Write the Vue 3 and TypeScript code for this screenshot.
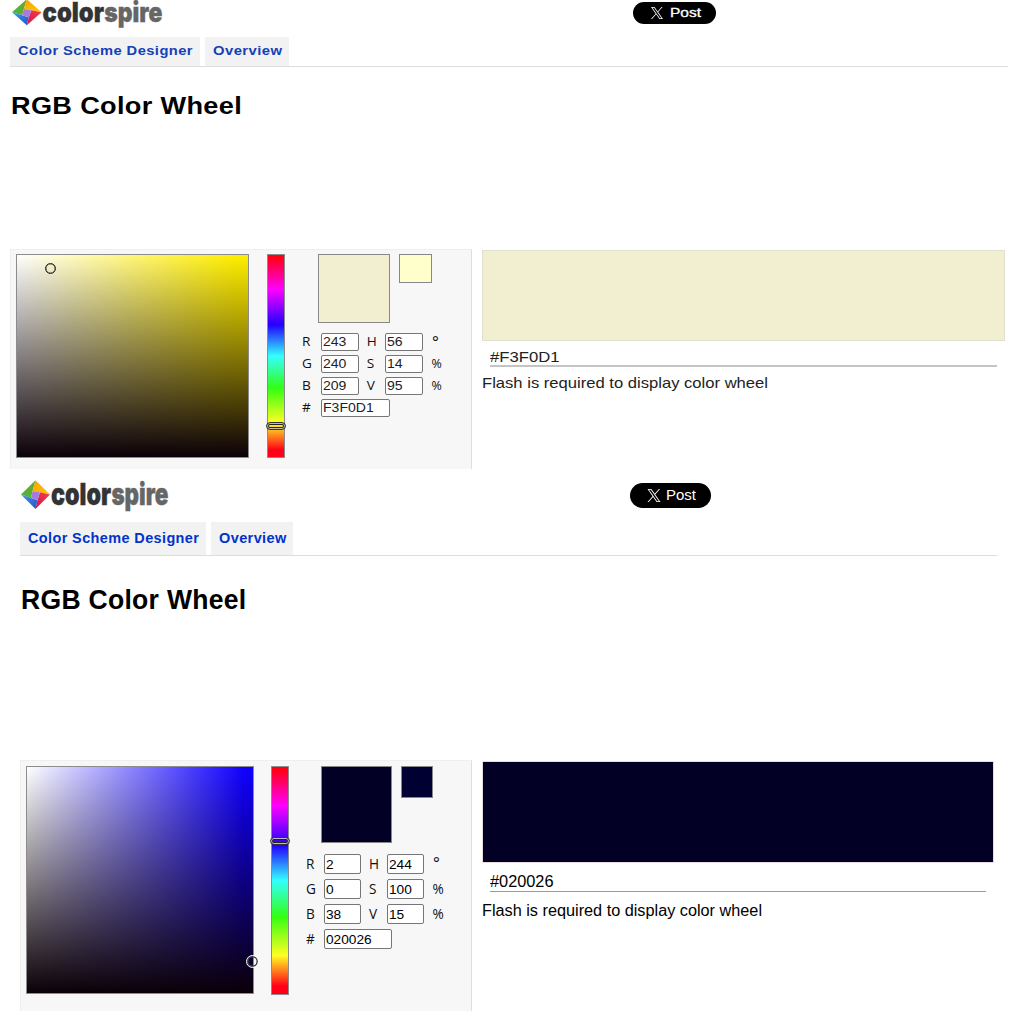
<script setup lang="ts">
import type { Directive } from 'vue'

interface Field {
  label: string
  value: string
  unit?: string
}

interface Page {
  id: string
  variant: 'compact' | 'regular'
  hex: string
  channels: [Field, Field][]
  // rendered widths of the text runs, in pixels
  widths: { post: number; tabs: [number, number]; title: number; code: number; note: number }
}

const tabs = ['Color Scheme Designer', 'Overview']

const pages: Page[] = [
  {
    id: 'cream',
    variant: 'compact',
    hex: 'F3F0D1',
    channels: [
      [{ label: 'R', value: '243' }, { label: 'H', value: '56', unit: '°' }],
      [{ label: 'G', value: '240' }, { label: 'S', value: '14', unit: '%' }],
      [{ label: 'B', value: '209' }, { label: 'V', value: '95', unit: '%' }],
    ],
    widths: { post: 31, tabs: [175, 69.5], title: 231, code: 69.5, note: 286 },
  },
  {
    id: 'navy',
    variant: 'regular',
    hex: '020026',
    channels: [
      [{ label: 'R', value: '2' }, { label: 'H', value: '244', unit: '°' }],
      [{ label: 'G', value: '0' }, { label: 'S', value: '100', unit: '%' }],
      [{ label: 'B', value: '38' }, { label: 'V', value: '15', unit: '%' }],
    ],
    widths: { post: 30, tabs: [171.3, 67.7], title: 225.5, code: 63.5, note: 280 },
  },
]

// Stretches a text run horizontally to the given width.
const vFit: Directive<HTMLElement, number> = {
  mounted(el, { value }) {
    el.style.transform = `scaleX(${value / el.getBoundingClientRect().width})`
  },
}
</script>

<template>
  <main class="sheet">
    <section v-for="p in pages" :key="p.id" class="page" :class="p.variant">
      <header class="top">
        <svg class="logo" viewBox="0 0 148 32" preserveAspectRatio="none" aria-label="colorspire">
          <defs>
            <linearGradient :id="p.id + '-g'" x1="0" y1="1" x2="1" y2="0">
              <stop offset="0" stop-color="#4db848" /><stop offset="1" stop-color="#6aa51c" />
            </linearGradient>
            <linearGradient :id="p.id + '-y'" x1="0" y1="0" x2="1" y2="1">
              <stop offset="0" stop-color="#f5a300" /><stop offset="1" stop-color="#ffc60a" />
            </linearGradient>
            <linearGradient :id="p.id + '-r'" x1="1" y1="0" x2="0" y2="1">
              <stop offset="0" stop-color="#f0444a" /><stop offset="1" stop-color="#d8104e" />
            </linearGradient>
            <linearGradient :id="p.id + '-b'" x1="0" y1="0" x2="1" y2="1">
              <stop offset="0" stop-color="#3c9be8" /><stop offset="1" stop-color="#2a50c8" />
            </linearGradient>
          </defs>
          <path d="M0 14.6 14.5.2 11.6 11 10 18z" :fill="`url(#${p.id}-g)`" />
          <path d="M14.5.2 29 14.6 19 12.3 11.6 11z" :fill="`url(#${p.id}-y)`" />
          <path d="M29 14.6 14.5 29 16.5 20 19 12.3z" :fill="`url(#${p.id}-r)`" />
          <path d="M14.5 29 0 14.6 10 18 16.5 20z" :fill="`url(#${p.id}-b)`" />
          <path d="M11.6 11 19 12.3 16.5 20 10 18z" fill="#a87ade" />
          <text x="30" y="25.2" textLength="60.2" lengthAdjust="spacingAndGlyphs" fill="#333">color</text>
          <text x="90.4" y="25.2" textLength="57" lengthAdjust="spacingAndGlyphs" fill="#666">spire</text>
        </svg>
        <a class="post">
          <svg class="x-mark" viewBox="0 0 24 24">
            <path
              fill="#fff"
              d="M14.258 10.152 23.176 0h-2.113l-7.747 8.813L7.133 0H0l9.352 13.328L0 23.973h2.113l8.176-9.309 6.531 9.309h7.133zm-2.895 3.293-.949-1.328L2.875 1.56h3.246l6.086 8.523.945 1.328 7.91 11.078h-3.246z"
            />
          </svg>
          <span v-fit="p.widths.post" class="fit">Post</span>
        </a>
      </header>

      <nav class="tabs">
        <a v-for="(t, i) in tabs" :key="t" class="tab">
          <span v-fit="p.widths.tabs[i]" class="fit">{{ t }}</span>
        </a>
      </nav>

      <h1 class="title"><span v-fit="p.widths.title" class="fit">RGB Color Wheel</span></h1>

      <div class="body">
        <div class="picker">
          <div class="field"><i class="cursor"></i></div>
          <div class="hue"><i class="handle"></i></div>
          <div class="controls">
            <div class="chips">
              <div class="chip current"></div>
              <div class="chip previous"></div>
            </div>
            <div class="grid">
              <template v-for="(row, r) in p.channels" :key="r">
                <template v-for="f in row" :key="f.label">
                  <span class="label">{{ f.label }}</span>
                  <div class="box"><span>{{ f.value }}</span></div>
                </template>
                <span class="label unit" :class="{ degree: row[1].unit === '°' }">{{ row[1].unit }}</span>
              </template>
              <span class="label">#</span>
              <div class="box hex"><span>{{ p.hex }}</span></div>
            </div>
          </div>
        </div>

        <div class="result">
          <div class="swatch"></div>
          <div class="code"><span v-fit="p.widths.code" class="fit">#{{ p.hex }}</span></div>
          <p class="note"><span v-fit="p.widths.note" class="fit">Flash is required to display color wheel</span></p>
        </div>
      </div>
    </section>
  </main>
</template>

<style>
body {
  margin: 0;
  background: #fff;
}
</style>

<style scoped>
.sheet {
  width: 1011px;
  height: 1031px;
  overflow: hidden;
  background: #fff;
  font-family: "Liberation Sans", Arial, sans-serif;
  color: #000;
}
.sheet * {
  box-sizing: border-box;
}
.page {
  display: flex;
  flex-direction: column;
}
.fit {
  display: inline-block;
  white-space: nowrap;
  transform-origin: 0 50%;
}

/* header */
.top {
  display: flex;
  align-items: flex-start;
}
.logo {
  display: block;
  flex: none;
  overflow: visible;
}
.logo text {
  font: 900 30.5px Inter, "Liberation Sans", sans-serif;
  stroke-width: 0.4px;
}
.logo text:first-of-type {
  stroke: #333;
}
.logo text:last-of-type {
  stroke: #666;
}
.post {
  display: flex;
  align-items: center;
  background: #000;
  color: #fff;
  border-radius: 13px;
}
.x-mark {
  display: block;
  flex: none;
}

/* tabs */
.tabs {
  display: flex;
  gap: 5px;
  border-bottom: 1px solid #ddd;
}
.tab {
  background: #f2f2f2;
  color: #03c;
  font-weight: bold;
  letter-spacing: 0.4px;
  padding-left: 8px;
}
.title {
  margin: 0;
  padding-left: 0.7px;
  font-weight: bold;
  letter-spacing: 0.3px;
}

/* picker */
.body {
  display: flex;
  gap: 10px;
}
.picker {
  display: flex;
  flex: none;
  align-items: flex-start;
  background: #f7f7f7;
  border: 1px solid #f1eeee;
  border-right-color: #e3dcdc;
  border-bottom: 0;
}
.field,
.hue {
  position: relative;
  flex: none;
  border: 1px solid #8c8c8c;
}
.hue {
  background: linear-gradient(#ff0011 1%, #ff00ff 17%, #2200ff 34.5%, #33ffff 50%, #33ff11 66%, #ffff22 83%, #ff0018 96.5%);
}
.cursor {
  position: absolute;
  border-radius: 50%;
}
.handle {
  position: absolute;
  left: -2px;
  right: -2px;
  border: 1px solid #333;
  border-radius: 4px;
  box-shadow: inset 0 0 0 1px #bbb, inset 0 0 0 2px #222;
}
.chips {
  display: flex;
  align-items: flex-start;
}
.chip {
  border: 1px solid #888;
}
.grid {
  display: grid;
}
.label {
  font-family: "Open Sans", "Noto Sans", sans-serif;
  color: #111;
}
.box {
  background: #fff;
  border: 1px solid #767676;
  border-radius: 2px;
  padding-left: 1px;
  overflow: hidden;
}
.box span {
  display: inline-block;
  transform-origin: 0 50%;
}
.hex {
  grid-column: 2 / 5;
}
.swatch {
  border: 1px solid #e6dcdc;
}
.code {
  margin-left: 7.5px;
  margin-right: 8px;
}
.note {
  margin: 0;
}

/* compact */
.compact {
  height: 469px;
  padding: 0 3px 0 10px;
}
.compact .top {
  height: 37px;
}
.compact .logo {
  width: 151px;
  height: 29px;
  margin: -1px 0 0 2px;
}
.compact .post {
  width: 83px;
  height: 22px;
  margin: 2px 0 0 470px;
  padding-left: 17px;
  gap: 6px;
  font-size: 12.6px;
  -webkit-text-stroke: 0.3px #fff;
}
.compact .x-mark {
  width: 14px;
  height: 12px;
}
.compact .tabs {
  width: 998px;
  height: 30px;
}
.compact .tab {
  width: 190px;
  line-height: 28px;
  font-size: 13.2px;
  color: #1540b8;
}
.compact .tab + .tab {
  width: 84px;
}
.compact .title {
  height: 182px;
  padding-top: 24px;
  line-height: 29px;
  font-size: 24.6px;
}
.compact .picker {
  width: 462px;
  height: 220px;
  padding: 4px 0 0 5px;
}
.compact .field {
  width: 233px;
  height: 204px;
  background: linear-gradient(to top, #0b0008, rgba(11, 0, 8, 0)), linear-gradient(to right, #fff, #ffee00 95%);
}
.compact .cursor {
  left: 28px;
  top: 8px;
  width: 11px;
  height: 11px;
  border: 1px solid #222;
  box-shadow: inset 0 0 0 0.6px #555;
}
.compact .hue {
  width: 18px;
  height: 204px;
  margin-left: 18px;
}
.compact .handle {
  top: 167px;
  height: 8px;
}
.compact .controls {
  margin-left: 17px;
}
.compact .chips {
  margin-left: 16px;
  gap: 9px;
}
.compact .current {
  width: 72px;
  height: 69px;
  background: #f2eed0;
}
.compact .previous {
  width: 33px;
  height: 29px;
  background: #ffffcc;
}
.compact .grid {
  margin-top: 9.5px;
  grid-template-columns: 19px 38px 26px 38px 20px;
  grid-auto-rows: 18px;
  row-gap: 4.3px;
}
.compact .label {
  font-size: 12.4px;
  line-height: 18px;
  transform: scaleX(1.1);
  transform-origin: 0 50%;
}
.compact .box + .label {
  padding-left: 7px;
}
.compact .box + .unit {
  padding-left: 8.5px;
  transform: none;
}
.compact .box + .degree {
  padding-left: 9px;
  font-size: 16px;
}
.compact .box {
  font-size: 12px;
  line-height: 16px;
  color: #222;
}
.compact .box span {
  transform: scaleX(1.17);
}
.compact .hex {
  width: 69px;
}
.compact .result {
  width: 523px;
  padding-top: 1px;
}
.compact .swatch {
  height: 91px;
  background: #f2eed0;
  border-color: #e0dfd2;
}
.compact .code {
  height: 26px;
  padding-top: 6px;
  line-height: 20px;
  font-size: 14px;
  border-bottom: 2px solid #c4c4c4;
  color: #222;
}
.compact .note {
  line-height: 20px;
  padding-top: 6px;
  font-size: 14.3px;
  color: #222;
}

/* regular */
.regular {
  padding: 11px 14px 0 20px;
}
.regular .top {
  height: 42px;
}
.regular .logo {
  width: 148px;
  height: 32px;
  margin-left: 1px;
}
.regular .post {
  width: 81px;
  height: 25px;
  margin: 3px 0 0 461px;
  padding: 0 0 1px 17px;
  gap: 5px;
  font-size: 14.6px;
}
.regular .x-mark {
  width: 14px;
  height: 13px;
  margin-top: 1px;
}
.regular .tabs {
  width: 977px;
  height: 34px;
}
.regular .tab {
  width: 186px;
  line-height: 32px;
  font-size: 14.6px;
}
.regular .tab + .tab {
  width: 82px;
}
.regular .title {
  height: 204px;
  padding-top: 28px;
  line-height: 32px;
  font-size: 27.4px;
}
.regular .picker {
  width: 452px;
  height: 251px;
  padding: 5px 0 0 5px;
}
.regular .field {
  width: 228px;
  height: 228px;
  background: linear-gradient(to top, #0b0008, rgba(11, 0, 8, 0)), linear-gradient(to right, #fff, #1000ff 96%);
}
.regular .cursor {
  left: 219px;
  top: 188px;
  width: 13px;
  height: 13px;
  border: 1px solid #fff;
  box-shadow: inset 0 0 0 1.5px #444;
}
.regular .hue {
  width: 18px;
  height: 229px;
  margin-left: 17px;
}
.regular .handle {
  top: 69.5px;
  height: 8px;
}
.regular .controls {
  margin-left: 17px;
}
.regular .chips {
  margin-left: 15px;
  gap: 9px;
}
.regular .current {
  width: 71px;
  height: 77px;
  background: #020024;
}
.regular .previous {
  width: 32px;
  height: 32px;
  background: #000033;
}
.regular .grid {
  margin-top: 11px;
  grid-template-columns: 18px 37px 26px 37px 20px;
  grid-auto-rows: 20px;
  row-gap: 5px;
}
.regular .label {
  font-size: 13.6px;
  line-height: 19px;
}
.regular .box + .label {
  padding-left: 8px;
}
.regular .box + .unit {
  padding-left: 8.5px;
}
.regular .box + .degree {
  padding-left: 9px;
  font-size: 16px;
}
.regular .box {
  font-size: 13.7px;
  line-height: 19px;
}
.regular .hex {
  width: 68px;
}
.regular .result {
  width: 512px;
  padding-top: 1px;
}
.regular .swatch {
  height: 102px;
  background: #020024;
}
.regular .code {
  height: 29px;
  padding-top: 8px;
  line-height: 22px;
  font-size: 16px;
  border-bottom: 1px solid #999;
}
.regular .note {
  line-height: 22px;
  padding-top: 8px;
  font-size: 16px;
}
</style>
